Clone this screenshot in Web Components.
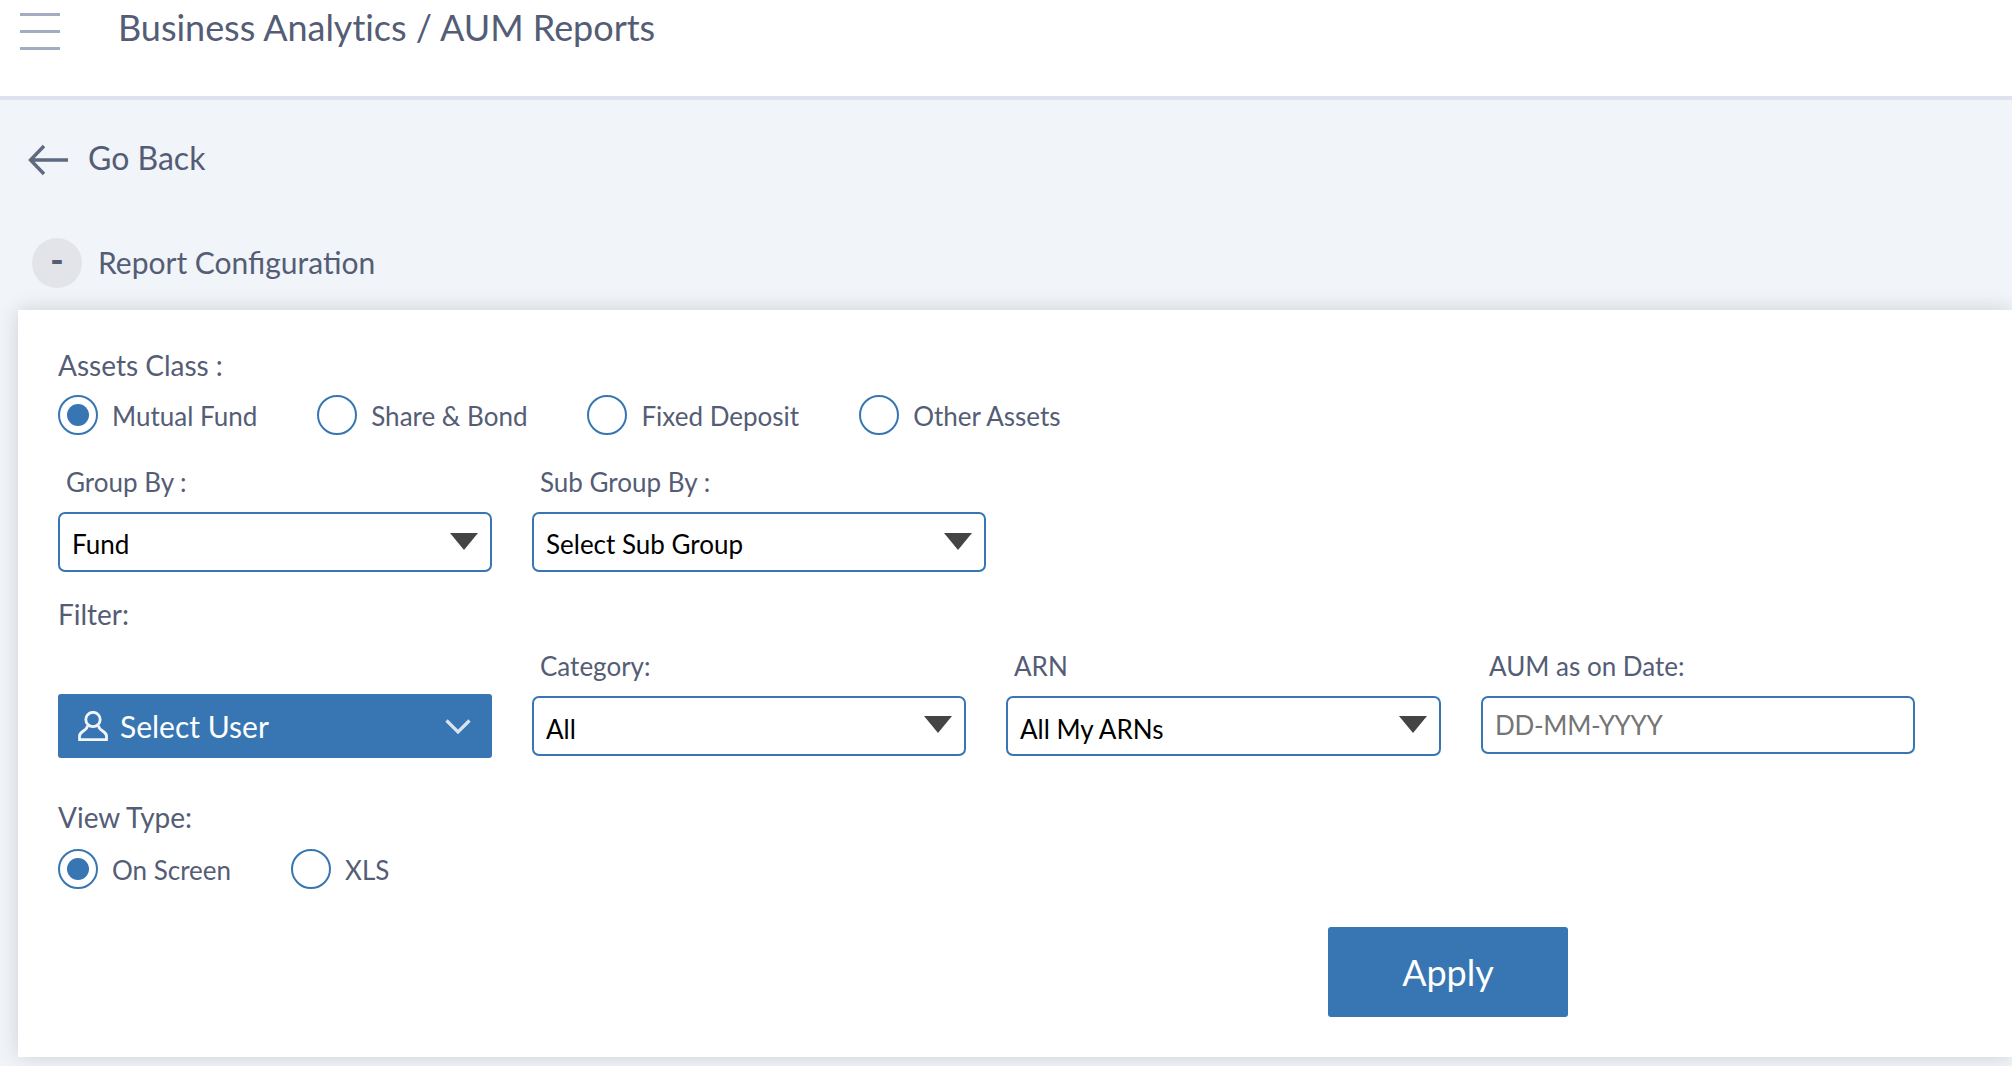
<!DOCTYPE html>
<html lang="en">
<head>
<meta charset="utf-8">
<title>AUM Reports</title>
<style>
    html, body { margin: 0; height: 100%; }
    body { background: #f1f4f9; color: #545d75; font-family: Lato, "Liberation Sans", sans-serif; overflow: hidden; }
</style>
</head>
<body>
<app-header>Business Analytics / AUM Reports</app-header>
<back-link>Go Back</back-link>
<section-toggle>Report Configuration</section-toggle>
<config-card>
    <field-label gap="12">Assets Class :</field-label>
    <radio-row>
        <radio-item checked>Mutual Fund</radio-item>
        <radio-item>Share &amp; Bond</radio-item>
        <radio-item>Fixed Deposit</radio-item>
        <radio-item>Other Assets</radio-item>
    </radio-row>
    <form-row top="29">
        <form-field width="434" label="Group By :" space="12"><select-box>Fund</select-box></form-field>
        <form-field width="454" label="Sub Group By :" space="12"><select-box>Select Sub Group</select-box></form-field>
    </form-row>
    <field-label top="24">Filter:</field-label>
    <form-row top="16">
        <form-field width="434" label="&nbsp;" space="10"><user-button>Select User</user-button></form-field>
        <form-field width="434" label="Category:" space="12"><select-box low>All</select-box></form-field>
        <form-field width="435" label="ARN" space="12"><select-box low>All My ARNs</select-box></form-field>
        <form-field width="434" label="AUM as on Date:" space="12"><date-box>DD-MM-YYYY</date-box></form-field>
    </form-row>
    <field-label top="41" gap="14">View Type:</field-label>
    <radio-row>
        <radio-item checked>On Screen</radio-item>
        <radio-item>XLS</radio-item>
    </radio-row>
    <apply-button>Apply</apply-button>
</config-card>

<script>
    class AppHeader extends HTMLElement {
        constructor() {
            super();
            this.attachShadow({ mode: "open" });
            this.shadowRoot.innerHTML = `
                <style>
                    :host { display: flex; height: 96px; background: #fff; border-bottom: 4px solid #dde2ee; }
                    .burger { width: 40px; margin: 13px 0 0 20px; height: 37px; display: flex; flex-direction: column; justify-content: space-between; }
                    .burger i { display: block; height: 3px; background: #a3acc0; }
                    .title { margin: 5px 0 0 58px; font-size: 36px; line-height: 44px; letter-spacing: -.03px; color: #545d75; }
                </style>
                <div class="burger"><i></i><i></i><i></i></div>
                <div class="title"><slot></slot></div>
            `;
        }
    }
    customElements.define('app-header', AppHeader);

    class BackLink extends HTMLElement {
        constructor() {
            super();
            this.attachShadow({ mode: "open" });
            this.shadowRoot.innerHTML = `
                <style>
                    :host { display: flex; align-items: center; height: 40px; padding: 37px 0 1px 28px; font-size: 32px; color: #545d75; }
                    svg { width: 40px; height: 32px; margin-right: 20px; margin-top: 6px; }
                </style>
                <svg viewBox="0 0 40 32" fill="none" stroke="#5f6980" stroke-width="3.4">
                    <path d="M40 16H3M16 2L2.5 16L16 30"/>
                </svg>
                <slot></slot>
            `;
        }
    }
    customElements.define('back-link', BackLink);

    class SectionToggle extends HTMLElement {
        constructor() {
            super();
            this.attachShadow({ mode: "open" });
            this.shadowRoot.innerHTML = `
                <style>
                    :host { display: flex; align-items: center; height: 50px; margin: 60px 0 22px 32px; font-size: 30px; color: #545d75; }
                    .dot { width: 50px; height: 50px; border-radius: 50%; background: #e2e4ea; margin-right: 16px; display: flex; justify-content: center; font-weight: 900; font-size: 36px; line-height: 42px; }
                    .text { margin-bottom: 2px; }
                </style>
                <div class="dot">-</div>
                <span class="text"><slot></slot></span>
            `;
        }
    }
    customElements.define('section-toggle', SectionToggle);

    class ConfigCard extends HTMLElement {
        constructor() {
            super();
            this.attachShadow({ mode: "open" });
            this.shadowRoot.innerHTML = `
                <style>
                    :host { display: block; height: 747px; box-sizing: border-box; margin-left: 18px; padding: 37px 0 0 40px; background: #fff; box-shadow: 0 0 20px rgba(0, 0, 0, .15); }
                </style>
                <slot></slot>
            `;
        }
    }
    customElements.define('config-card', ConfigCard);

    class FieldLabel extends HTMLElement {
        constructor() {
            super();
            this.attachShadow({ mode: "open" });
            this.shadowRoot.innerHTML = `
                <style>
                    :host { display: block; font-size: 28px; line-height: 36px; color: #545d75; }
                </style>
                <slot></slot>
            `;
        }
        connectedCallback() {
            this.style.marginTop = (this.getAttribute('top') || 0) + 'px';
            this.style.marginBottom = (this.getAttribute('gap') || 0) + 'px';
        }
    }
    customElements.define('field-label', FieldLabel);

    class RadioRow extends HTMLElement {
        constructor() {
            super();
            this.attachShadow({ mode: "open" });
            this.shadowRoot.innerHTML = `
                <style>
                    :host { display: flex; column-gap: 60px; }
                </style>
                <slot></slot>
            `;
        }
    }
    customElements.define('radio-row', RadioRow);

    class RadioItem extends HTMLElement {
        constructor() {
            super();
            this.attachShadow({ mode: "open" });
            this.shadowRoot.innerHTML = `
                <style>
                    :host { display: flex; align-items: center; height: 40px; font-size: 26px; color: #545d75; }
                    .ring { width: 40px; height: 40px; box-sizing: border-box; border: 2px solid #3776b2; border-radius: 50%; margin-right: 14px; display: flex; align-items: center; justify-content: center; background: #fff; }
                    :host([checked]) .ring::after { content: ""; width: 22px; height: 22px; border-radius: 50%; background: #3776b2; }
                    .text { margin-top: 2px; }
                </style>
                <div class="ring"></div>
                <span class="text"><slot></slot></span>
            `;
        }
    }
    customElements.define('radio-item', RadioItem);

    class FormRow extends HTMLElement {
        constructor() {
            super();
            this.attachShadow({ mode: "open" });
            this.shadowRoot.innerHTML = `
                <style>
                    :host { display: flex; column-gap: 40px; align-items: flex-start; }
                </style>
                <slot></slot>
            `;
        }
        connectedCallback() {
            this.style.marginTop = (this.getAttribute('top') || 0) + 'px';
        }
    }
    customElements.define('form-row', FormRow);

    class FormField extends HTMLElement {
        constructor() {
            super();
            this.attachShadow({ mode: "open" });
            this.shadowRoot.innerHTML = `
                <style>
                    :host { display: block; flex: none; }
                    .label { height: 36px; line-height: 36px; padding-left: 8px; font-size: 26px; color: #545d75; }
                </style>
                <div class="label"></div>
                <slot></slot>
            `;
        }
        connectedCallback() {
            this.style.width = this.getAttribute('width') + 'px';
            const label = this.shadowRoot.querySelector('.label');
            label.textContent = this.getAttribute('label');
            label.style.marginBottom = this.getAttribute('space') + 'px';
        }
    }
    customElements.define('form-field', FormField);

    class SelectBox extends HTMLElement {
        constructor() {
            super();
            this.attachShadow({ mode: "open" });
            this.shadowRoot.innerHTML = `
                <style>
                    :host { display: flex; align-items: center; justify-content: space-between; height: 60px; box-sizing: border-box; border: 2px solid #3776b2; border-radius: 7px; padding: 4px 12px 0 12px; background: #fff; color: #000; font-size: 26px; }
                    :host([low]) { padding-top: 6px; }
                    .caret { width: 0; height: 0; border-left: 14px solid transparent; border-right: 14px solid transparent; border-top: 17px solid #444; margin-bottom: 6px; }
                    :host([low]) .caret { margin-bottom: 10px; }
                </style>
                <span><slot></slot></span>
                <div class="caret"></div>
            `;
        }
    }
    customElements.define('select-box', SelectBox);

    class DateBox extends HTMLElement {
        constructor() {
            super();
            this.attachShadow({ mode: "open" });
            this.shadowRoot.innerHTML = `
                <style>
                    :host { display: flex; align-items: center; height: 58px; box-sizing: border-box; border: 2px solid #3776b2; border-radius: 7px; padding: 0 12px 1px; background: #fff; color: #757575; font-size: 26px; letter-spacing: -.3px; }
                </style>
                <slot></slot>
            `;
        }
    }
    customElements.define('date-box', DateBox);

    class UserButton extends HTMLElement {
        constructor() {
            super();
            this.attachShadow({ mode: "open" });
            this.shadowRoot.innerHTML = `
                <style>
                    :host { display: flex; align-items: center; height: 64px; box-sizing: border-box; padding: 0 21px 0 20px; background: #3776b2; border-radius: 3px; color: #fff; font-size: 30px; }
                    .user { width: 30px; height: 30px; margin-right: 12px; }
                    .label { flex: 1; }
                    .chev { width: 26px; height: 15px; }
                </style>
                <svg class="user" viewBox="0 0 30 30" fill="none" stroke="#f2f6fa" stroke-width="2.8">
                    <circle cx="15" cy="8.500" r="7.200"/>
                    <path d="M9.500 14.500C9.500 20 1.500 20 1.500 25V28.700H28.500V25C28.500 20 20.500 20 20.500 14.500"/>
                </svg>
                <span class="label"><slot></slot></span>
                <svg class="chev" viewBox="0 0 26 15" fill="none" stroke="#d7e3ef" stroke-width="3.2">
                    <path d="M1.500 1.500L13 13L24.500 1.500"/>
                </svg>
            `;
        }
    }
    customElements.define('user-button', UserButton);

    class ApplyButton extends HTMLElement {
        constructor() {
            super();
            this.attachShadow({ mode: "open" });
            this.shadowRoot.innerHTML = `
                <style>
                    :host { display: flex; align-items: center; justify-content: center; width: 240px; height: 90px; margin: 38px 0 0 1270px; background: #3776b2; border-radius: 3px; color: #fff; font-size: 36px; }
                </style>
                <slot></slot>
            `;
        }
    }
    customElements.define('apply-button', ApplyButton);
</script>
</body>
</html>
